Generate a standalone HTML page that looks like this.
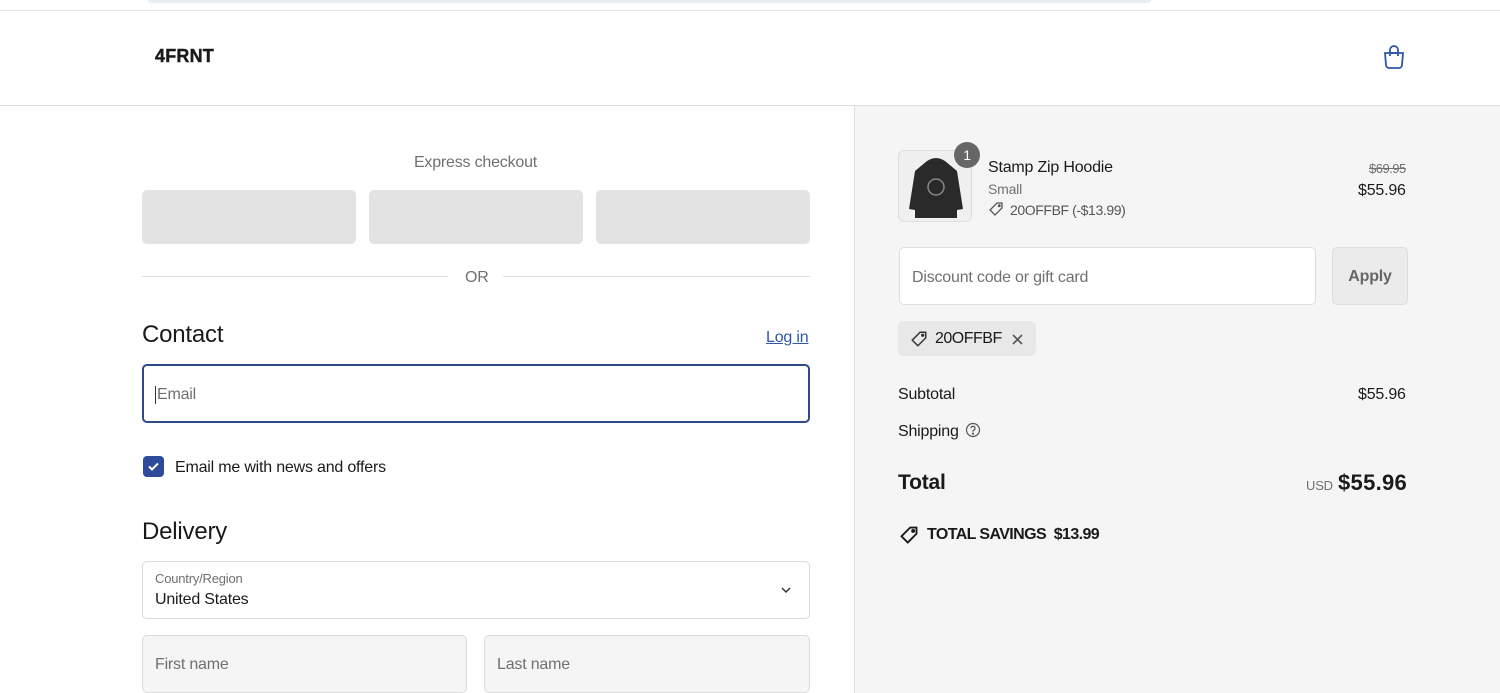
<!DOCTYPE html>
<html><head><meta charset="utf-8"><style>
*{box-sizing:border-box;margin:0;padding:0}
body{width:1500px;height:693px;overflow:hidden;background:#fff;font-family:"Liberation Sans",sans-serif;color:#1a1a1a;position:relative;letter-spacing:-0.2px}
.abs{position:absolute}
.topbar{left:148px;top:0;width:1003px;height:3px;background:#e6edf5;border-radius:0 0 3px 3px}
.hdrline{left:0;top:10px;width:1500px;height:1px;background:#e2e2e2}
.hdrline2{left:0;top:105px;width:1500px;height:1px;background:#dedede}
.logo{left:155px;top:46px;font-weight:900;font-size:18px;letter-spacing:0.2px;-webkit-text-stroke:0.4px #1a1a1a}
.right{left:854px;top:106px;width:646px;height:587px;background:#f5f5f5;border-left:1px solid #e0e0e0}
.ebtn{top:190px;width:214px;height:54px;background:#e3e3e3;border-radius:5px}
.field{border:1px solid #dcdcdc;border-radius:5px;background:#fff}
.gray{color:#707070}
</style></head><body>
<div class="abs topbar"></div>
<div class="abs hdrline"></div>
<div class="abs logo">4FRNT</div>
<svg class="abs" style="left:1382px;top:44px" width="24" height="26" viewBox="0 0 24 26" fill="none" stroke="#2e57a8" stroke-width="1.8"><path d="M3 9h18l-1 12a3 3 0 0 1-3 3H7a3 3 0 0 1-3-3z"/><path d="M8 12V6a4 4 0 0 1 8 0v6"/><path d="M8 9h8"/></svg>
<div class="abs hdrline2"></div>
<div class="abs right"></div>

<div class="abs gray" style="left:0;width:951px;top:154px;text-align:center;font-size:16px">Express checkout</div>
<div class="abs ebtn" style="left:142px"></div>
<div class="abs ebtn" style="left:369px"></div>
<div class="abs ebtn" style="left:596px"></div>
<div class="abs" style="left:142px;top:276px;width:306px;height:1px;background:#dedede"></div>
<div class="abs" style="left:503px;top:276px;width:307px;height:1px;background:#dedede"></div>
<div class="abs gray" style="left:465px;top:269px;font-size:16px">OR</div>
<div class="abs" style="left:142px;top:321px;font-size:24px">Contact</div>
<div class="abs" style="left:766px;top:329px;font-size:16px;color:#2e57a8;text-decoration:underline">Log in</div>
<div class="abs" style="left:142px;top:364px;width:668px;height:59px;border:2px solid #2e4a8a;border-radius:5px"></div>
<div class="abs gray" style="left:155px;top:386px;font-size:16px;border-left:1px solid #333;padding-left:1px">Email</div>
<div class="abs" style="left:143px;top:456px;width:21px;height:21px;background:#2e4a9a;border-radius:4px"></div>
<svg class="abs" style="left:146px;top:459px" width="15" height="15" viewBox="0 0 15 15"><path d="M3 7.5l3 3 6-6" stroke="#fff" stroke-width="2" fill="none"/></svg>
<div class="abs" style="left:175px;top:459px;font-size:16px">Email me with news and offers</div>
<div class="abs" style="left:142px;top:518px;font-size:24px">Delivery</div>
<div class="abs field" style="left:142px;top:561px;width:668px;height:58px"></div>
<div class="abs gray" style="left:155px;top:571px;font-size:13px">Country/Region</div>
<div class="abs" style="left:155px;top:591px;font-size:16px">United States</div>
<svg class="abs" style="left:780px;top:585px" width="12" height="10" viewBox="0 0 12 10"><path d="M2 3l4 4 4-4" stroke="#333" stroke-width="1.5" fill="none"/></svg>
<div class="abs field" style="left:142px;top:635px;width:325px;height:58px;background:#f5f5f5"></div>
<div class="abs gray" style="left:155px;top:656px;font-size:16px">First name</div>
<div class="abs field" style="left:484px;top:635px;width:326px;height:58px;background:#f5f5f5"></div>
<div class="abs gray" style="left:497px;top:656px;font-size:16px">Last name</div>

<!-- right -->
<div class="abs" style="left:898px;top:150px;width:74px;height:72px;border:1px solid #ddd;border-radius:6px;background:#f0f0f0;overflow:hidden">
<svg width="74" height="72" viewBox="0 0 74 72"><path d="M28 10q9-6 18 0l12 10 6 38-6 1v8H16v-8l-6-1 6-38z" fill="#2a2a2a"/><circle cx="37" cy="36" r="8" fill="none" stroke="#888" stroke-width="1.5"/></svg></div>
<div class="abs" style="left:954px;top:142px;width:26px;height:26px;border-radius:13px;background:#666;color:#fff;text-align:center;line-height:26px;font-size:14px">1</div>
<div class="abs" style="left:988px;top:159px;font-size:16px">Stamp Zip Hoodie</div>
<div class="abs gray" style="left:988px;top:181px;font-size:14px">Small</div>
<svg class="abs" style="left:988px;top:201px" width="16" height="16" viewBox="0 0 16 16" fill="none" stroke="#555" stroke-width="1.3"><path d="M9 2h5v5l-7 7-5-5z"/><circle cx="11.3" cy="4.7" r="0.8" fill="#555"/></svg>
<div class="abs" style="left:1010px;top:202px;font-size:14px;color:#555;letter-spacing:-0.4px">20OFFBF (-$13.99)</div>
<div class="abs gray" style="left:1369px;top:161px;font-size:13px;text-decoration:line-through;letter-spacing:-0.5px">$69.95</div>
<div class="abs" style="left:1358px;top:182px;font-size:16px">$55.96</div>
<div class="abs field" style="left:899px;top:247px;width:417px;height:58px"></div>
<div class="abs gray" style="left:912px;top:269px;font-size:16px">Discount code or gift card</div>
<div class="abs" style="left:1332px;top:247px;width:76px;height:58px;border:1px solid #ddd;border-radius:5px;background:#ebebeb;color:#666;font-weight:bold;font-size:16px;text-align:center;line-height:58px">Apply</div>
<div class="abs" style="left:898px;top:321px;width:138px;height:35px;border-radius:5px;background:#e8e8e8"></div>
<svg class="abs" style="left:909px;top:330px" width="20" height="18" viewBox="0 0 16 16" fill="none" stroke="#333" stroke-width="1.3"><path d="M9 2h5v5l-7 7-5-5z"/><circle cx="11.3" cy="4.7" r="0.8" fill="#333"/></svg>
<div class="abs" style="left:935px;top:330px;font-size:16px;letter-spacing:-0.5px">20OFFBF</div>
<svg class="abs" style="left:1011px;top:333px" width="13" height="13" viewBox="0 0 13 13"><path d="M2 2l9 9M11 2l-9 9" stroke="#555" stroke-width="1.6"/></svg>
<div class="abs" style="left:898px;top:386px;font-size:16px">Subtotal</div>
<div class="abs" style="left:1358px;top:386px;font-size:16px">$55.96</div>
<div class="abs" style="left:898px;top:423px;font-size:16px">Shipping</div>
<svg class="abs" style="left:965px;top:422px" width="16" height="16" viewBox="0 0 16 16" fill="none" stroke="#555" stroke-width="1.2"><circle cx="8" cy="8" r="6.5"/><path d="M6 6.3a2 2 0 1 1 2.6 1.9c-.4.2-.6.5-.6 1v.5"/><circle cx="8" cy="11.6" r=".5" fill="#555"/></svg>
<div class="abs" style="left:898px;top:471px;font-size:21px;font-weight:bold">Total</div>
<div class="abs gray" style="left:1306px;top:478px;font-size:13px">USD</div>
<div class="abs" style="left:1338px;top:470px;font-size:22px;font-weight:bold;letter-spacing:0.3px">$55.96</div>
<svg class="abs" style="left:899px;top:525px" width="20" height="20" viewBox="0 0 16 16" fill="none" stroke="#1a1a1a" stroke-width="1.5"><path d="M9 2h5v5l-7 7-5-5z"/><circle cx="11.3" cy="4.7" r="0.8" fill="#1a1a1a"/></svg>
<div class="abs" style="left:927px;top:526px;font-size:16px;font-weight:bold;letter-spacing:-0.6px">TOTAL SAVINGS&nbsp; $13.99</div>
</body></html>
